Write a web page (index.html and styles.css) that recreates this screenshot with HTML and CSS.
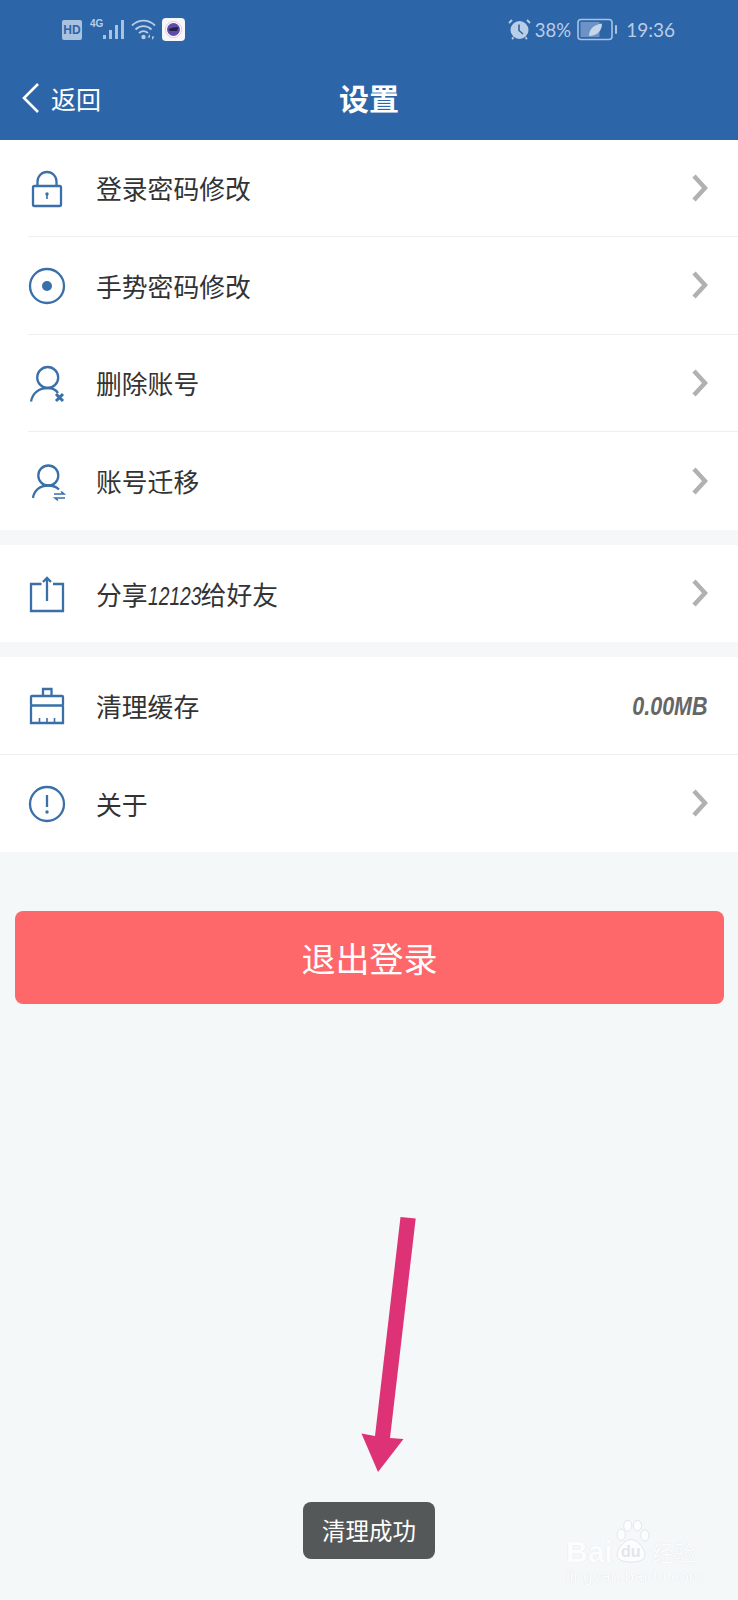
FILE: index.html
```html
<!DOCTYPE html>
<html lang="zh-CN">
<head>
  <meta charset="UTF-8">
  <title>设置</title>
  <link rel="stylesheet" href="styles.css">
</head>
<body>

  <div class="page">
    <div class="top">
      <div class="status">
        <div class="status-left">
          <span class="hd">HD</span>
          <span class="net">4G</span>
          <svg class="signal" width="21" height="21" viewBox="0 0 21 21">
            <rect x="0" y="16" width="3" height="4" />
            <rect x="6" y="11" width="3" height="9" />
            <rect x="12" y="6" width="3" height="14" />
            <rect x="18" y="1" width="3" height="19" />
          </svg>
          <svg class="wifi" width="27" height="23" viewBox="0 0 27 23">
            <path d="M1 7.5 C7.5 1 17.5 1 24 7.5" />
            <path d="M4.5 11.5 C9 7 16 7 20.5 11.5" />
            <path d="M8 15 C11 12.5 14 12.5 17 15" />
            <circle class="wifi-dot" cx="12.5" cy="19" r="2.2" />
            <path class="wifi-dot" d="M19 16 l-2.5 3.500 h2.500z M21 22 l2.500 -3.500 h-2.500z" />
          </svg>
          <span class="app-icon">
            <svg width="17" height="17" viewBox="0 0 17 17">
              <circle cx="8.5" cy="8.5" r="8" fill="#fff" stroke="#d9a9d6" stroke-width="0.7" />
              <circle cx="8.5" cy="8.5" r="6.5" fill="#5f4aa6" />
              <path d="M3.5 8 L8 6.5 L13.5 6 L12 10 L5 10z" fill="#241c4d" />
            </svg>
          </span>
        </div>
        <div class="status-right">
          <svg width="23" height="23" viewBox="0 0 23 23">
            <circle cx="11.5" cy="12" r="9" fill="#b9cde6" />
            <path d="M11 6.5 V12.5 L15 16" fill="none" stroke="#2d65a9" stroke-width="1.6" />
            <path d="M1 5 L4 2 M22 5 L19 2 M4 21 L5.5 19.5 M19 21 L17.5 19.5" fill="none" stroke="#b9cde6" stroke-width="1.8" />
          </svg>
          <span class="battery-text">38%</span>
          <svg width="41" height="23" viewBox="0 0 41 23">
            <rect x="1" y="1.500" width="34" height="20" rx="3" fill="none" stroke="#a9c2e0" stroke-width="1.6" />
            <rect x="3.500" y="4" width="19" height="15" fill="#6d93c6" />
            <path d="M12 18 C12 11 17 6.500 25 5.500 C25 13 20 18 12 18z" fill="#c5d6ea" />
            <rect x="38" y="7" width="2" height="9" rx="1" fill="#a9c2e0" />
          </svg>
          <span class="clock">19:36</span>
        </div>
      </div>

      <div class="nav">
        <div class="back">
          <svg width="20" height="32" viewBox="0 0 20 32">
            <path d="M17 2 L3 16 L17 30" fill="none" stroke="#fff" stroke-width="2.600" />
          </svg>
          <span>返回</span>
        </div>
        <h1 class="title">设置</h1>
      </div>
    </div>

    <div class="group">
      <div class="row row-inset row-line">
        <svg class="row-icon" width="40" height="40" viewBox="0 0 40 40">
          <rect x="6" y="17" width="28" height="20" rx="1.5" />
          <path d="M10.5 17 V12.5 a9.5 9.5 0 0 1 19 0 V17" />
          <circle class="solid" cx="20" cy="25" r="1.7" />
          <path class="thin" d="M20 25 V30" />
        </svg>
        <span class="row-text">登录密码修改</span>
        <svg class="chevron" width="16" height="28" viewBox="0 0 16 28"><path d="M2 2 L13 14 L2 26" /></svg>
      </div>
      <div class="row row-inset row-line">
        <svg class="row-icon" width="40" height="40" viewBox="0 0 40 40">
          <circle cx="20" cy="20" r="17" />
          <circle class="solid" cx="20" cy="20" r="5" />
        </svg>
        <span class="row-text">手势密码修改</span>
        <svg class="chevron" width="16" height="28" viewBox="0 0 16 28"><path d="M2 2 L13 14 L2 26" /></svg>
      </div>
      <div class="row row-inset row-line">
        <svg class="row-icon" width="40" height="40" viewBox="0 0 40 40">
          <circle cx="20.700" cy="13.500" r="10.500" />
          <path d="M4 37.500 C5.500 29 12 24 20.700 24 C25 24 29 26 31 29" />
          <path class="thick" d="M29 30 L36 37 M36 30 L29 37" />
        </svg>
        <span class="row-text">删除账号</span>
        <svg class="chevron" width="16" height="28" viewBox="0 0 16 28"><path d="M2 2 L13 14 L2 26" /></svg>
      </div>
      <div class="row row-inset">
        <svg class="row-icon" width="40" height="40" viewBox="0 0 40 40">
          <circle cx="21.300" cy="13.500" r="10" />
          <path d="M6 36 C7 28.500 13 23.500 21.300 23.500 C25.500 23.500 29.500 25 32 27.500" />
          <path class="thin" d="M27 32 H37 L34 29.500 M38 36 H28 L31 38.500" />
        </svg>
        <span class="row-text">账号迁移</span>
        <svg class="chevron" width="16" height="28" viewBox="0 0 16 28"><path d="M2 2 L13 14 L2 26" /></svg>
      </div>
    </div>

    <div class="group">
      <div class="row">
        <svg class="row-icon" width="40" height="40" viewBox="0 0 40 40">
          <path d="M14.5 10 H4 V37 H36 V10 H26" />
          <path d="M20 27 V4 M16 8 L20 4 L24 8" />
        </svg>
        <span class="row-text">分享<i class="digits">12123</i>给好友</span>
        <svg class="chevron" width="16" height="28" viewBox="0 0 16 28"><path d="M2 2 L13 14 L2 26" /></svg>
      </div>
    </div>

    <div class="group">
      <div class="row row-line">
        <svg class="row-icon" width="40" height="40" viewBox="0 0 40 40">
          <path d="M16 10 V3 H24.500 V10" />
          <rect x="4" y="10" width="32" height="9.500" rx="1" />
          <path d="M4 19.500 V37 H36 V19.500" />
          <path class="thin" d="M12.500 37 V32 M20 37 V32 M27.500 37 V32" />
        </svg>
        <span class="row-text">清理缓存</span>
        <span class="cache-size">0.00MB</span>
      </div>
      <div class="row">
        <svg class="row-icon" width="40" height="40" viewBox="0 0 40 40">
          <circle cx="20" cy="20" r="17" />
          <path d="M20 11 V23" />
          <circle class="solid" cx="20" cy="28" r="1.700" />
        </svg>
        <span class="row-text">关于</span>
        <svg class="chevron" width="16" height="28" viewBox="0 0 16 28"><path d="M2 2 L13 14 L2 26" /></svg>
      </div>
    </div>

    <button class="logout" type="button">退出登录</button>

    <!-- pink arrow added over the screenshot -->
    <svg class="arrow" width="738" height="1600" viewBox="0 0 738 1600">
      <path d="M400.500 1217 L415.700 1218.500 L390 1438 L403.500 1439 L378 1472 L361.500 1433.500 L375 1436z" fill="#dd3275" />
    </svg>

    <div class="toast">清理成功</div>

    <div class="watermark">
      <div class="wm-top">
        <span class="wm-bai">Bai</span>
        <svg width="40" height="44" viewBox="0 0 46 54">
          <ellipse cx="11" cy="18" rx="5" ry="7" />
          <ellipse cx="19" cy="7" rx="5" ry="6.500" />
          <ellipse cx="31" cy="7" rx="5" ry="6.500" />
          <ellipse cx="40" cy="19" rx="5" ry="7" />
          <path d="M23 24 C32 24 45 40 38 48 C32 53 14 53 8 48 C1 40 14 24 23 24z" />
        </svg>
        <span class="wm-du">du</span>
        <span class="wm-cn">经验</span>
      </div>
      <div class="wm-url">jingyan.baidu.com</div>
    </div>
  </div>

</body>
</html>
```

FILE: styles.css
```css
* {
  box-sizing: border-box;
}
body {
  margin: 0;
  font-family: "Noto Sans CJK SC", "Noto Sans", sans-serif;
  background: #f4f8f9;
}
.page {
  position: relative;
  width: 738px;
  height: 1600px;
  overflow: hidden;
}

/* header */
.top {
  height: 139.5px;
  background: #2d65a9;
  color: #fff;
}
.status {
  height: 56px;
  padding: 3px 63px 0 62px;
  display: flex;
  justify-content: space-between;
  align-items: center;
  color: #b9cde6;
}
.status-left,
.status-right {
  display: flex;
  align-items: center;
}
.hd {
  width: 20px;
  height: 20px;
  border-radius: 2px;
  background: #a9c2e0;
  color: #2d65a9;
  font: bold 12px/20px "Liberation Sans", sans-serif;
  text-align: center;
}
.net {
  width: 14px;
  margin: -11px 0 0 8px;
  font: bold 10px/12px "Liberation Sans", sans-serif;
}
.signal {
  margin-left: -1px;
  fill: #a9c2e0;
}
.wifi {
  margin-left: 7px;
  fill: none;
  stroke: #b9cde6;
  stroke-width: 1.8;
}
.wifi-dot {
  fill: #b9cde6;
  stroke: none;
}
.app-icon {
  width: 23px;
  height: 23px;
  margin-left: 4px;
  border-radius: 4px;
  background: #f7f7fb;
  display: flex;
  align-items: center;
  justify-content: center;
}
.battery-text {
  margin: 0 6px 0 4px;
  font: 18.500px/24px "Lato", sans-serif;
}
.clock {
  margin-left: 8px;
  font: 19px/24px "Lato", sans-serif;
}
.nav {
  position: relative;
  height: 83.5px;
  padding-left: 21px;
  display: flex;
  align-items: center;
}
.back {
  display: flex;
  align-items: center;
  gap: 10px;
  font-size: 25px;
}
.title {
  position: absolute;
  left: 0;
  right: 0;
  top: 0;
  margin: 0;
  font-size: 30px;
  line-height: 83.5px;
  font-weight: bold;
  text-align: center;
}

/* list */
.group {
  background: #fff;
  margin-bottom: 15px;
}
.row {
  height: 97.5px;
  padding: 0 30px 0 27px;
  display: flex;
  align-items: center;
  color: #333;
  font-size: 25.8px;
}
.row-inset {
  margin-left: 28px;
  padding-left: 0;
}
.row-inset .row-icon {
  margin-left: -1px;
}
.row-line {
  border-bottom: 1px solid #eeeeee;
}
.row-icon {
  flex: none;
  margin-top: 2px;
  margin-right: 29px;
  fill: none;
  stroke: #3a6fa9;
  stroke-width: 2.3;
}
.row-icon .solid {
  fill: #3a6fa9;
  stroke: none;
}
.row-icon .thick {
  stroke-width: 3;
}
.row-icon .thin {
  stroke-width: 1.6;
}
.row-text {
  flex: 1;
}
.digits {
  display: inline-block;
  width: 53px;
  font: italic 26px "Liberation Sans", sans-serif;
  transform: scaleX(0.74);
  transform-origin: left;
}
.chevron {
  flex: none;
  fill: none;
  stroke: #b1b1b1;
  stroke-width: 4.500;
}
.cache-size {
  margin-top: 2px;
  white-space: nowrap;
  font: italic bold 25px "Liberation Sans", sans-serif;
  color: #666;
  transform: scaleX(0.86);
  transform-origin: right;
}

.logout {
  display: block;
  width: 709px;
  height: 93px;
  margin: 59px 0 0 15px;
  border: 0;
  border-radius: 8px;
  background: #ff686b;
  color: #fff;
  font-family: inherit;
  font-size: 34px;
}

/* overlays */
.arrow {
  position: absolute;
  left: 0;
  top: 0;
  pointer-events: none;
}
.toast {
  position: absolute;
  left: 303px;
  top: 1502px;
  width: 132px;
  height: 57px;
  border-radius: 8px;
  background: #555858;
  color: #fff;
  font-size: 23.500px;
  line-height: 57px;
  text-align: center;
}
.watermark {
  position: absolute;
  left: 566px;
  top: 1517px;
  width: 134px;
  color: #fcfdfe;
  text-shadow: 0 0 1px #d8dcdf;
}
.wm-top {
  position: relative;
  height: 54px;
}
.wm-top svg {
  position: absolute;
  left: 45px;
  top: 3px;
  fill: #fcfdfe;
  stroke: #dde1e4;
}
.wm-bai {
  position: absolute;
  left: 0;
  top: 18px;
  font: bold 30px/34px "Liberation Sans", sans-serif;
}
.wm-du {
  position: absolute;
  left: 55px;
  top: 25px;
  font: bold 16px/20px "Liberation Sans", sans-serif;
  color: #e3e6e9;
  text-shadow: none;
}
.wm-cn {
  position: absolute;
  left: 86px;
  top: 20px;
  font-size: 22px;
  line-height: 28px;
  white-space: nowrap;
}
.wm-url {
  margin-top: -4px;
  font: 17px/20px "Liberation Sans", sans-serif;
  white-space: nowrap;
}
```
